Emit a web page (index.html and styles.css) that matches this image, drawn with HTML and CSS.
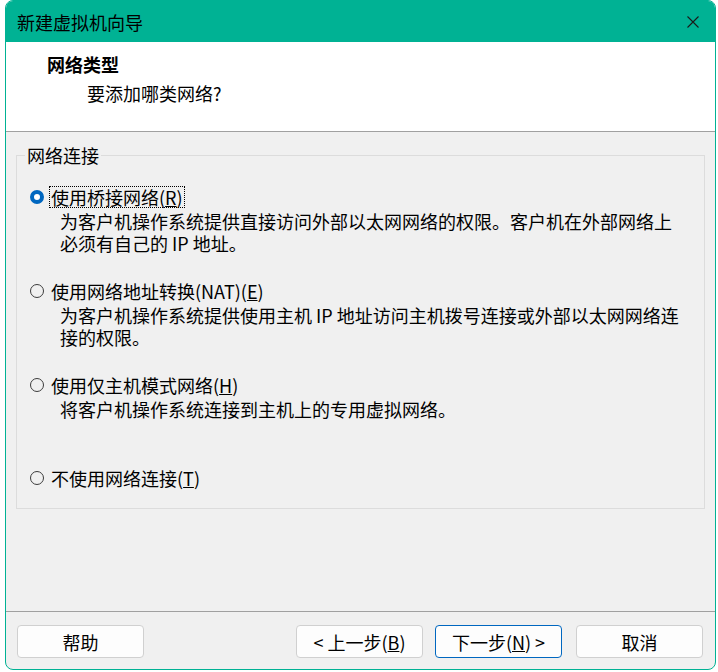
FILE: index.html
```html
<!DOCTYPE html>
<html lang="zh-CN">
<head>
    <meta charset="UTF-8">
    <meta name="viewport" content="width=device-width, initial-scale=1.0">
    <title>新建虚拟机向导</title>
    <link rel="stylesheet" href="styles.css">
</head>
<body>
    <div class="window">
        <div class="titlebar">
            <span class="title">新建虚拟机向导</span>
            <svg class="close" width="12" height="12" viewBox="0 0 12 12">
                <path d="M0.5 0.5 L11.5 11.5 M11.5 0.5 L0.5 11.5" stroke="#1a1a1a" stroke-width="1.1" fill="none"/>
            </svg>
        </div>

        <div class="header">
            <div class="heading">网络类型</div>
            <div class="subheading">要添加哪类网络?</div>
        </div>

        <div class="content">
            <fieldset class="group">
                <legend>网络连接</legend>

                <div class="option">
                    <div class="option-row">
                        <span class="radio checked"></span>
                        <span class="label focused">使用桥接网络(<u>R</u>)</span>
                    </div>
                    <div class="desc">为客户机操作系统提供直接访问外部以太网网络的权限。客户机在外部网络上<br>必须有自己的 IP 地址。</div>
                </div>

                <div class="option">
                    <div class="option-row">
                        <span class="radio"></span>
                        <span class="label">使用网络地址转换(NAT)(<u>E</u>)</span>
                    </div>
                    <div class="desc">为客户机操作系统提供使用主机 IP 地址访问主机拨号连接或外部以太网网络连<br>接的权限。</div>
                </div>

                <div class="option spaced">
                    <div class="option-row">
                        <span class="radio"></span>
                        <span class="label">使用仅主机模式网络(<u>H</u>)</span>
                    </div>
                    <div class="desc">将客户机操作系统连接到主机上的专用虚拟网络。</div>
                </div>

                <div class="option last">
                    <div class="option-row">
                        <span class="radio"></span>
                        <span class="label">不使用网络连接(<u>T</u>)</span>
                    </div>
                </div>
            </fieldset>
        </div>

        <div class="footer">
            <button class="btn">帮助</button>
            <div class="spacer"></div>
            <button class="btn">&lt; 上一步(<u>B</u>)</button>
            <button class="btn primary">下一步(<u>N</u>) &gt;</button>
            <button class="btn cancel">取消</button>
        </div>
    </div>
</body>
</html>
```

FILE: styles.css
```css
body {
    margin: 0;
    background-color: #fff;
    font-family: "Noto Sans CJK SC", "Microsoft YaHei", sans-serif;
    font-size: 18px;
    line-height: 22px;
    color: #000;
}

.window {
    margin-left: 5px;
    width: 711px;
    height: 670px;
    box-sizing: border-box;
    border: 1px solid #00b294;
    border-radius: 8px;
    overflow: hidden;
    display: flex;
    flex-direction: column;
    background-color: #f0f0f0;
}

.titlebar {
    height: 41px;
    background-color: #00b294;
    display: flex;
    align-items: center;
    padding-left: 11px;
    padding-right: 16px;
}

.title {
    flex: 1;
}

.close {
    display: block;
}

.header {
    height: 90px;
    box-sizing: border-box;
    background-color: #fff;
    border-bottom: 1px solid #a0a0a0;
    padding-top: 11px;
}

.heading {
    font-weight: bold;
    padding-left: 41px;
}

.subheading {
    padding-left: 81px;
    margin-top: 7px;
}

.content {
    flex: 1;
    padding: 12px 10px 0 10px;
}

.group {
    margin: 0;
    border: 1px solid #dcdcdc;
    padding: 20px 8px 19px 8px;
}

.group legend {
    padding: 0 2px;
}

.option {
    margin-bottom: 26px;
}

.option.spaced {
    margin-bottom: 47px;
}

.option.last {
    margin-bottom: 0;
}

.option-row {
    display: flex;
    align-items: center;
    height: 22px;
}

.radio {
    width: 14px;
    height: 14px;
    box-sizing: border-box;
    border: 1px solid #3c3c3c;
    border-radius: 50%;
    margin-left: 5px;
    margin-right: 5px;
    background-color: transparent;
}

.radio.checked {
    border: 4px solid #0067c0;
    background-color: #fff;
}

.label {
    border: 1px dotted transparent;
    padding: 0 1px;
    line-height: 20px;
}

.label.focused {
    border-color: #000;
}

.desc {
    padding-left: 35px;
    margin-top: 2px;
    white-space: nowrap;
}

.footer {
    border-top: 1px solid #a0a0a0;
    padding: 13px 12px 11px 11px;
    display: flex;
    align-items: center;
}

.spacer {
    flex: 1;
}

.btn {
    width: 127px;
    height: 33px;
    background-color: #fdfdfd;
    border: 1px solid #d0d0d0;
    border-radius: 4px;
    font-family: inherit;
    font-size: 18px;
    color: #000;
    padding: 0;
}

.btn.primary {
    border-color: #0067c0;
    margin-left: 12px;
}

.btn.cancel {
    margin-left: 14px;
}
```
